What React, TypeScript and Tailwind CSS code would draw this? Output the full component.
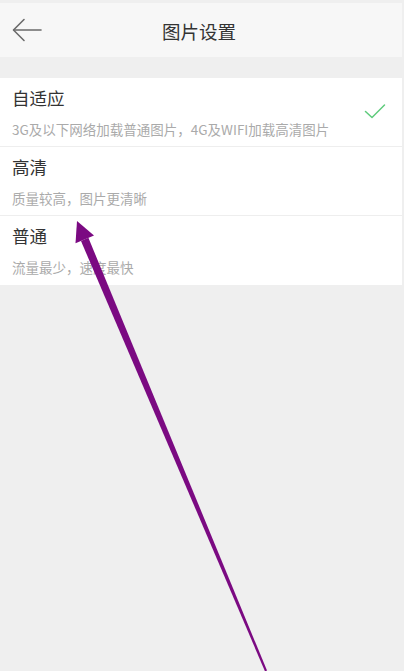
const options = [
  { title: "自适应", desc: "3G及以下网络加载普通图片，4G及WIFI加载高清图片", checked: true },
  { title: "高清", desc: "质量较高，图片更清晰", checked: false },
  { title: "普通", desc: "流量最少，速度最快", checked: false },
]

export default function App() {
  return (
    <div
      className="relative h-[671px] w-[404px] overflow-hidden bg-[#efefef]"
      style={{ fontFamily: '"Noto Sans CJK SC", "Noto Sans", sans-serif' }}
    >
      <div className="mr-[2px] h-full">
        {/* header */}
        <div className="mt-[3px] flex h-[54px] items-center bg-[#f7f7f7] pl-[12px]">
          <svg width="30" height="24" viewBox="0 0 30 24" fill="none" stroke="#6b6b6b" strokeWidth="1.6" strokeLinecap="round" strokeLinejoin="round">
            <path d="M2 12h27" />
            <path d="M12 1.5L1.5 12L12 22.5" />
          </svg>
          <div className="flex-1 pr-[46px] pt-[3px] text-center text-[18.5px] text-[#333]">图片设置</div>
        </div>

        <div className="h-[21px]" />

        {/* options */}
        <div className="bg-white">
          {options.map((opt, i) => (
            <div
              key={i}
              className={`flex h-[69px] pl-3 pr-4 pt-[8px] ${i < options.length - 1 ? "border-b border-[#eeeeee]" : ""}`}
            >
              <div className="flex-1">
                <div className="text-[17.5px] leading-6 text-[#333]">{opt.title}</div>
                <div className="mt-[10px] text-[13.5px] leading-[18px] text-[#aaa]">{opt.desc}</div>
              </div>
              {opt.checked && (
                <svg className="mt-[17px]" width="22" height="16" viewBox="0 0 22 16" fill="none" stroke="#5ecb7c" strokeWidth="1.5" strokeLinecap="round" strokeLinejoin="round">
                  <path d="M1.5 8.5L8 14.5L20.5 2" />
                </svg>
              )}
            </div>
          ))}
        </div>
      </div>

      {/* annotation arrow */}
      <svg className="pointer-events-none absolute left-0 top-0" width="404" height="671" viewBox="0 0 404 671">
        <polygon points="77,221 94,235.5 75.5,243.3" fill="#7b0a82" />
        <polygon points="81,241 88.4,237.8 267,670.6 265,671.4" fill="#7b0a82" />
      </svg>
    </div>
  )
}
